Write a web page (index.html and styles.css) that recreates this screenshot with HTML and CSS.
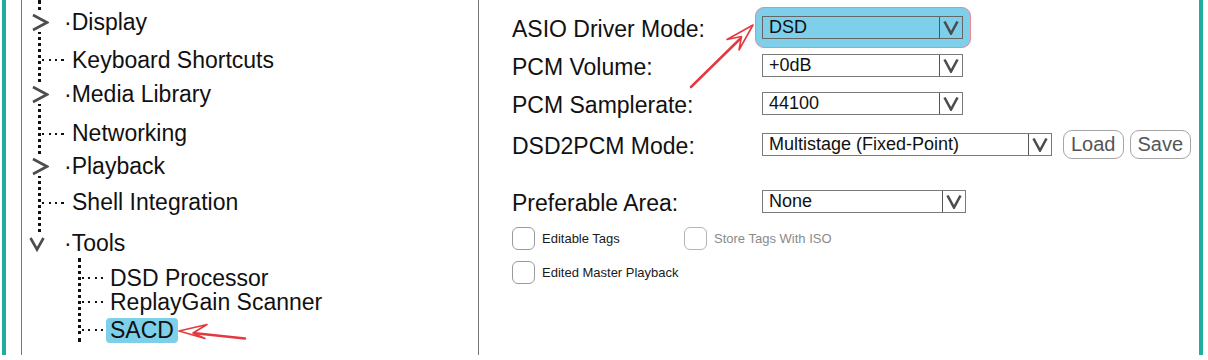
FILE: index.html
```html
<!DOCTYPE html>
<html lang="en">
<head>
  <meta charset="UTF-8">
  <title>Preferences - SACD</title>
  <link rel="stylesheet" href="styles.css">
</head>
<body>

  <div class="frame">
    <div class="accent"></div>

    <!-- Preferences tree -->
    <aside class="nav">
      <ul class="tree">
        <li class="node branch">
          <span class="twisty"><svg width="20" height="19"><polyline points="4,2 18,9.5 4,17"/></svg></span>
          <span class="label">·Display</span>
        </li>
        <li class="node leaf"><span class="stub"></span><span class="label">Keyboard Shortcuts</span></li>
        <li class="node branch">
          <span class="twisty"><svg width="20" height="19"><polyline points="4,2 18,9.5 4,17"/></svg></span>
          <span class="label">·Media Library</span>
        </li>
        <li class="node leaf"><span class="stub"></span><span class="label">Networking</span></li>
        <li class="node branch">
          <span class="twisty"><svg width="20" height="19"><polyline points="4,2 18,9.5 4,17"/></svg></span>
          <span class="label">·Playback</span>
        </li>
        <li class="node leaf"><span class="stub"></span><span class="label">Shell Integration</span></li>
        <li class="node branch open">
          <span class="twisty"><svg width="20" height="24"><polyline points="1.5,4 8,15.5 14.5,4"/></svg></span>
          <span class="label">·Tools</span>
        </li>
      </ul>
      <ul class="subtree">
        <li class="node leaf"><span class="stub"></span><span class="label">DSD Processor</span></li>
        <li class="node leaf"><span class="stub"></span><span class="label">ReplayGain Scanner</span></li>
        <li class="node leaf"><span class="stub"></span><span class="label selected">SACD</span></li>
      </ul>
    </aside>

    <!-- SACD settings -->
    <main class="settings">
      <div class="field">
        <span class="caption">ASIO Driver Mode:</span>
        <span class="ring">
          <span class="combo"><span class="value">DSD</span><span class="drop"><svg width="16" height="15"><polyline points="1.5,1.5 8,13.5 14.5,1.5"/></svg></span></span>
        </span>
      </div>
      <div class="field">
        <span class="caption">PCM Volume:</span>
        <span class="combo"><span class="value">+0dB</span><span class="drop"><svg width="16" height="15"><polyline points="1.5,1.5 8,13.5 14.5,1.5"/></svg></span></span>
      </div>
      <div class="field">
        <span class="caption">PCM Samplerate:</span>
        <span class="combo"><span class="value">44100</span><span class="drop"><svg width="16" height="15"><polyline points="1.5,1.5 8,13.5 14.5,1.5"/></svg></span></span>
      </div>
      <div class="field tall">
        <span class="caption">DSD2PCM Mode:</span>
        <span class="combo long"><span class="value">Multistage (Fixed-Point)</span><span class="drop"><svg width="16" height="15"><polyline points="1.5,1.5 8,13.5 14.5,1.5"/></svg></span></span>
        <button class="btn first">Load</button>
        <button class="btn">Save</button>
      </div>
      <div class="field spaced">
        <span class="caption">Preferable Area:</span>
        <span class="combo area"><span class="value">None</span><span class="drop"><svg width="16" height="15"><polyline points="1.5,1.5 8,13.5 14.5,1.5"/></svg></span></span>
      </div>

      <div class="checks">
        <label class="check"><span class="box"></span>Editable Tags</label>
        <label class="check disabled"><span class="box"></span>Store Tags With ISO</label>
        <label class="check"><span class="box"></span>Edited Master Playback</label>
      </div>
    </main>

    <div class="accent"></div>

    <!-- red annotation arrows -->
    <svg class="callouts" width="1208" height="355">
      <line x1="691" y1="87" x2="742" y2="37"/>
      <polygon points="753,25 727,39.5 741.5,36.5 739,50"/>
      <line x1="245" y1="338.5" x2="193" y2="333"/>
      <polygon points="179,331 207,324.5 193,333 205,338.5"/>
    </svg>
  </div>

</body>
</html>
```

FILE: styles.css
```css
* {
  box-sizing: border-box;
}

body {
  margin: 0;
  background: #fff;
  color: #111;
  font-family: "Liberation Sans", Arial, sans-serif;
}

/* Window frame */
.frame {
  position: relative;
  display: flex;
  height: 355px;
  padding: 0 5px 0 2px;
}

.accent {
  flex: none;
  width: 4px;
  background: #20ad9c;
}

/* Left pane: the tree */
.nav {
  flex: none;
  width: 458px;
  margin-left: 15px;
  border-left: 1px solid #777;
  border-right: 1px solid #777;
}

.tree,
.subtree {
  list-style: none;
  margin: 0;
  display: grid;
  align-items: start;
  border-left: 3px dotted #111;
}

.tree {
  margin-left: 16px;
  padding: 7px 0 0;
  grid-template-rows: 38px 34px 39.5px 33px 36px 40.5px 30px;
}

.subtree {
  margin-left: 56px;
  padding: 8px 0 0;
  grid-template-rows: 24px 28px 24px;
}

.node {
  display: flex;
  align-items: center;
  height: 30px;
  font-size: 23px;
  white-space: nowrap;
}

.subtree .node {
  height: 24px;
}

.twisty {
  display: flex;
  width: 20px;
  height: 19px;
  margin-left: -12px;
  background: #fff;
}

.twisty svg,
.drop svg {
  fill: none;
  stroke: #4d4d4d;
  stroke-width: 2.6;
}

.open .twisty {
  align-self: flex-end;
  height: 24px;
}

.branch .label {
  margin-left: 15px;
}

.stub {
  width: 26px;
  height: 2px;
  margin-left: 1px;
  background: repeating-linear-gradient(to right, #111 0 2px, transparent 2px 6.5px);
}

.subtree .stub {
  width: 24px;
}

.leaf .label {
  margin-left: 4px;
}

.leaf .label.selected {
  margin-left: 0;
  padding: 0 4px;
  line-height: 25px;
  background: #7dcfea;
  border-radius: 4px;
}

/* Right pane: SACD settings */
.settings {
  flex: 1;
  padding: 8.5px 0 0 33px;
}

.field {
  display: flex;
  align-items: center;
  height: 38px;
}

.field.tall {
  height: 44px;
}

.field.spaced {
  margin-top: 16px;
}

.caption {
  flex: none;
  width: 250px;
  padding-top: 3px;
  font-size: 23px;
}

.combo {
  display: flex;
  width: 201px;
  height: 23px;
  border: 1px solid #7a7a7a;
  background: #fff;
  font-size: 18px;
}

.combo.long {
  width: 290px;
}

.combo.area {
  width: 204px;
}

.combo .value {
  flex: 1;
  padding-left: 6px;
  line-height: 21px;
}

.drop {
  display: flex;
  align-items: center;
  justify-content: center;
  width: 23px;
  border-left: 1px solid #555;
}

.ring {
  display: flex;
  margin: -9px -8px -9px -7px;
  padding: 8px 7px 8px 6px;
  background: #7dcfea;
  border: 1px solid #e98a94;
  border-radius: 9px;
}

.ring .combo {
  background: transparent;
  border-color: #666;
}

.btn {
  height: 29px;
  margin-left: 6px;
  padding: 0 7px;
  border: 1px solid #a5a5a5;
  border-radius: 9px;
  background: #fff;
  color: #555;
  font-family: inherit;
  font-size: 20px;
}

.btn.first {
  margin-left: 11px;
}

.checks {
  display: grid;
  grid-template-columns: 172px auto;
  grid-auto-rows: 34px;
  justify-content: start;
  margin-top: 1px;
}

.check {
  display: flex;
  align-items: center;
  gap: 7px;
  font-size: 13px;
  color: #1a1a1a;
}

.box {
  width: 23px;
  height: 23px;
  border: 1px solid #9a9a9a;
  border-radius: 6px;
}

.check.disabled {
  color: #8a8a8a;
}

.check.disabled .box {
  border-color: #b5b5b5;
}

/* Annotation arrows drawn over the window */
.callouts {
  position: absolute;
  top: 0;
  left: 0;
  pointer-events: none;
}

.callouts line {
  stroke: #e4393f;
  stroke-width: 2.5;
  stroke-linecap: round;
}

.callouts polygon {
  fill: #fff;
  stroke: #e4393f;
  stroke-width: 1.6;
  stroke-linejoin: round;
}
```
